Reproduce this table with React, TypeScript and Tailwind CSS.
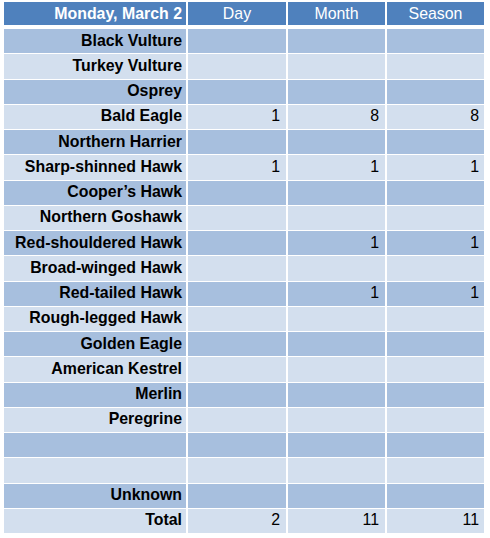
const rows: [string, string, string, string][] = [
  ["Black Vulture", "", "", ""],
  ["Turkey Vulture", "", "", ""],
  ["Osprey", "", "", ""],
  ["Bald Eagle", "1", "8", "8"],
  ["Northern Harrier", "", "", ""],
  ["Sharp-shinned Hawk", "1", "1", "1"],
  ["Cooper’s Hawk", "", "", ""],
  ["Northern Goshawk", "", "", ""],
  ["Red-shouldered Hawk", "", "1", "1"],
  ["Broad-winged Hawk", "", "", ""],
  ["Red-tailed Hawk", "", "1", "1"],
  ["Rough-legged Hawk", "", "", ""],
  ["Golden Eagle", "", "", ""],
  ["American Kestrel", "", "", ""],
  ["Merlin", "", "", ""],
  ["Peregrine", "", "", ""],
  ["", "", "", ""],
  ["", "", "", ""],
  ["Unknown", "", "", ""],
  ["Total", "2", "11", "11"],
];

const grid = "grid grid-cols-[182px_98px_97px_97px] gap-x-[2px]";

export default function App() {
  return (
    <div
      className="w-[490px] h-[538px] bg-white pt-[2px] pl-[4px] text-black text-[15.9px] leading-none"
      style={{ fontFamily: '"Liberation Sans", Arial, sans-serif' }}
    >
      <div className={`${grid} h-[23px] text-white`}>
        <div className="bg-[#4f81bd] flex items-center justify-end pr-[4px] font-bold">
          Monday, March 2
        </div>
        <div className="bg-[#4f81bd] flex items-center justify-center">Day</div>
        <div className="bg-[#4f81bd] flex items-center justify-center">Month</div>
        <div className="bg-[#4f81bd] flex items-center justify-center">Season</div>
      </div>
      <div className="mt-[4px] flex flex-col gap-y-[1px]">
        {rows.map(([name, day, month, season], i) => {
          const bg = i % 2 === 0 ? "bg-[#a7bfde]" : "bg-[#d3dfee]";
          return (
            <div key={i} className={`${grid} h-[24.25px]`}>
              <div className={`${bg} flex items-center justify-end pr-[4px] pb-[1px] font-bold`}>
                {name}
              </div>
              <div className={`${bg} flex items-center justify-end pr-[6px] pb-[1px]`}>{day}</div>
              <div className={`${bg} flex items-center justify-end pr-[6px] pb-[1px]`}>{month}</div>
              <div className={`${bg} flex items-center justify-end pr-[5px] pb-[1px]`}>{season}</div>
            </div>
          );
        })}
      </div>
    </div>
  );
}
